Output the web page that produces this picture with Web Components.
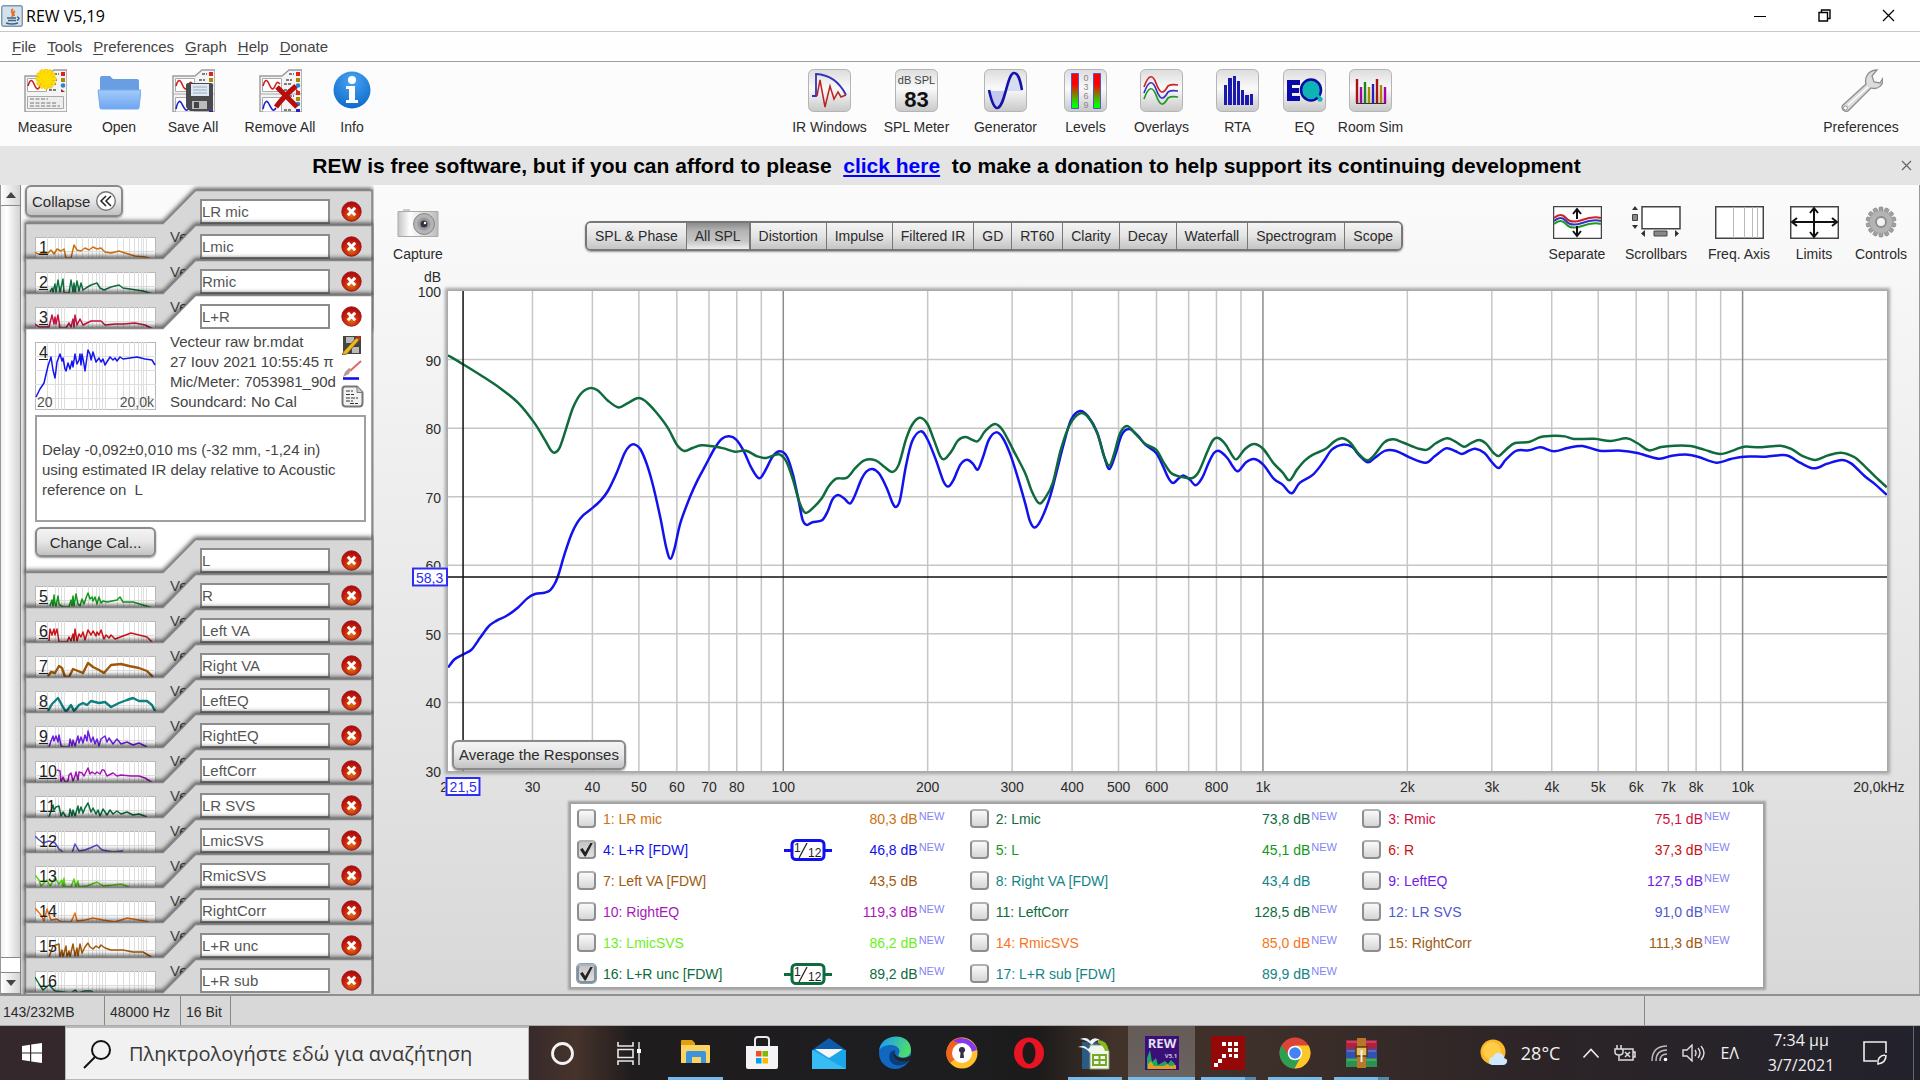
<!DOCTYPE html>
<html lang="el">
<head>
<meta charset="utf-8">
<title>REW V5,19</title>
<style>
  html, body { margin: 0; height: 100%; }
  body {
    display: flex; flex-direction: column; height: 100vh; overflow: hidden;
    font-family: "Liberation Sans", Arial, sans-serif; font-size: 15px; color: #2b2b2b; background: #fcfcfc;
  }
  main { flex: 1; min-height: 0; display: flex; background: linear-gradient(#fbfbfb, #d8d8d8); }
  rew-graph { flex: 1; min-width: 0; }
</style>
</head>
<body>
<win-titlebar>REW V5,19</win-titlebar>
<rew-menubar></rew-menubar>
<rew-toolbar>
  <tool-button slot="start" icon="measure" style="--w:74px">Measure</tool-button>
  <tool-button slot="start" icon="open" style="--w:74px">Open</tool-button>
  <tool-button slot="start" icon="save" style="--w:74px">Save All</tool-button>
  <tool-button slot="start" icon="remove" style="--w:100px">Remove All</tool-button>
  <tool-button slot="start" icon="info" style="--w:44px">Info</tool-button>
  <tool-button icon="ir" style="--w:86px">IR Windows</tool-button>
  <tool-button icon="meter" style="--w:88px">SPL Meter</tool-button>
  <tool-button icon="generator" style="--w:90px">Generator</tool-button>
  <tool-button icon="levels" style="--w:70px">Levels</tool-button>
  <tool-button icon="overlays" style="--w:82px">Overlays</tool-button>
  <tool-button icon="rta" style="--w:70px">RTA</tool-button>
  <tool-button icon="eq" style="--w:64px">EQ</tool-button>
  <tool-button icon="room" style="--w:68px">Room Sim</tool-button>
  <tool-button slot="end" icon="wrench" style="--w:88px">Preferences</tool-button>
</rew-toolbar>
<rew-banner>REW is free software, but if you can afford to please&nbsp; <a href="#donate">click here</a>&nbsp; to make a donation to help support its continuing development</rew-banner>
<main>
  <measurement-panel></measurement-panel>
  <rew-graph></rew-graph>
</main>
<rew-statusbar></rew-statusbar>
<win-taskbar></win-taskbar>

<script>
const plate = (id) => `<defs><linearGradient id="${id}" x1="0" y1="0" x2="0" y2="1"><stop offset="0" stop-color="#dcdcdc"/><stop offset=".45" stop-color="#fafafa"/><stop offset="1" stop-color="#c8c8c8"/></linearGradient></defs><rect x=".5" y=".5" width="42" height="42" rx="5" fill="url(#${id})" stroke="#b4b4b4"/>`;
const sheet = `<path d="M1 43V7h22l7-6h13v42z" fill="#f4f4f4" stroke="#9a9a9a" stroke-width="1.4"/><path d="M3.5 9.500h19v13h-19z" fill="#fff" stroke="#aaa"/><path d="M4 17C6 10 8 10 10 15s4 7 6 2 3-4 5-2" fill="none" stroke="#c22" stroke-width="1.600"/><path d="M30 5h5M27 11h6M25 15h7M25 21h7" stroke="#555" stroke-width="1.300" stroke-dasharray="3 1"/><path d="M37 3h4v4h-4z" fill="#d22"/><path d="M37 9h4v4h-4z" fill="#a80"/><circle cx="39" cy="16.500" r="2.300" fill="#28c"/><path d="M37 20l4 3h-4z" fill="#a22"/>`;
const lower = `<path d="M1 25h42" stroke="#aaa"/><path d="M3.500 28.500h19V43h-19z" fill="#fff" stroke="#aaa"/><path d="M4 40c2-9 4-9 6-5s4 9 7 4" fill="none" stroke="#22c" stroke-width="1.600"/><path d="M30 27h5M25 41h8" stroke="#555" stroke-width="1.300" stroke-dasharray="3 1"/><path d="M37 22h4v4h-4z" fill="#d22"/><path d="M37 28h4v4h-4z" fill="#a80"/><circle cx="39" cy="35" r="2.300" fill="#28c"/><path d="M37 40h4v3h-4z" fill="#22c"/>`;
const burst = Array.from({length: 12}, (_, i) => `<path d="M22 10L20 1.500a2 2 0 0 1 4 0z" transform="rotate(${i * 30} 22 10)"/>`).join('');
const teeth = Array.from({length: 14}, (_, i) => `<rect x="14" y="1" width="4" height="8" rx="1" transform="rotate(${i * 360 / 14} 16 16)"/>`).join('');

const ICONS = {
  measure: [43, 43, `${sheet}<path d="M3.500 27.500h36v12h-36z" fill="#eee" stroke="#aaa"/><path d="M6 30h18M6 34h26M6 37h30" stroke="#777" stroke-width="1.200" stroke-dasharray="4 1.500"/><g fill="#fd0" stroke="#eb0" stroke-width=".6">${burst}<circle cx="22" cy="10" r="6.500" stroke="none"/></g>`],
  open: [44, 44, `<defs><linearGradient id="of" x1="0" y1="0" x2="0" y2="1"><stop offset="0" stop-color="#a4cafa"/><stop offset="1" stop-color="#6ca6f0"/></linearGradient></defs><path d="M3 36V9q0-2 2-2h8l3 3h24q2 0 2 2v24z" fill="#6a9ee2"/><path d="M1 21h43l-2 18q0 1-2 1H5q-2 0-2-1z" fill="url(#of)" stroke="#78aaf0"/>`],
  save: [43, 43, `${sheet}${lower}<g transform="translate(14 14)"><path d="M0 2q0-2 2-2h22q3 0 3 2v26H4l-4-4z" fill="#4a4a4e"/><path d="M5 1h18v12H5z" fill="#dfe9f4"/><path d="M7 4h14M7 7h14M7 10h14" stroke="#9ab"/><path d="M6 18h15v8H6z" fill="#bbb"/><path d="M8 19h5v6H8z" fill="#444"/></g>`],
  remove: [43, 43, `${sheet}${lower}<path d="M18 18l20 20M37 17C30 23 22 31 17 38" stroke="#b80d0d" stroke-width="5" fill="none"/>`],
  info: [38, 43, `<defs><radialGradient id="inf" cx=".5" cy=".25" r=".8"><stop offset="0" stop-color="#4aa4f4"/><stop offset="1" stop-color="#0a68c8"/></radialGradient></defs><circle cx="19" cy="21" r="18.500" fill="url(#inf)"/><circle cx="19" cy="11" r="4" fill="#fff"/><path d="M13 17h9v14h3v3H13v-3h3V20h-3z" fill="#fff"/>`],
  ir: [43, 43, `${plate('p')}<path d="M4 27h4V5Q28 6 38 26" fill="none" stroke="#33b" stroke-width="1.800"/><path d="M9 27l3-16 5 27 5-21 4 13 4-7 3 5 5-2" fill="none" stroke="#b22" stroke-width="1.500"/>`],
  meter: [43, 43, `${plate('p')}<text x="21.500" y="15" font-size="11" text-anchor="middle" fill="#444">dB SPL</text><text x="21.500" y="38" font-size="22" font-weight="700" text-anchor="middle" fill="#111">83</text>`],
  generator: [43, 43, `${plate('p')}<path d="M5 22h17C17 36 15 39 13 39S8 34 5 22z" fill="#c4c8ec"/><path d="M22 22h16C35 8 33 4 30 4s-5 8-8 18z" fill="#d8dcf0"/><path d="M5 21c3 14 6 18 8 18 8 0 10-35 17-35 4 0 6 6 8 17" fill="none" stroke="#1414aa" stroke-width="2.600"/>`],
  levels: [43, 43, `${plate('p')}<defs><linearGradient id="lv" x1="0" y1="0" x2="0" y2="1"><stop offset=".3" stop-color="#f00"/><stop offset=".9" stop-color="#0f0"/></linearGradient></defs><path d="M7.500 4.500h7v35h-7zM29.500 4.500h7v35h-7z" fill="url(#lv)" stroke="#55c"/><g font-size="9" fill="#888" text-anchor="middle"><text x="22" y="12">0</text><text x="22" y="21">3</text><text x="22" y="30">6</text><text x="22" y="39">9</text></g>`],
  overlays: [43, 43, `${plate('p')}<g fill="none" stroke-width="1.700"><path d="M4 18C9 4 13 6 16 14s6 14 12 3q3-2 10-1" stroke="#c22"/><path d="M4 24C9 10 13 12 16 20s6 14 12 3q3-2 10-1" stroke="#33c"/><path d="M4 30C9 16 13 18 16 26s6 14 12 3q3-2 10-1" stroke="#292"/></g>`],
  rta: [43, 43, `${plate('p')}<path d="M8 36V16h3V36zM12 36V9h4V36zM17 36V7h3V36zM21 36V12h3V36zM25 36V21h3V36zM29 36V26h4V36zM34 36V25h3V36z" fill="#1a1ab0"/>`],
  eq: [43, 43, `${plate('p')}<path d="M4 11h13v5H9v3h7v5H9v3h8v5H4z" fill="#0a0aa8"/><ellipse cx="28" cy="21" rx="10" ry="10.500" fill="#0cb4b4" stroke="#0a0aa8" stroke-width="2.500"/><path d="M34 26l5 5M35 31h4" stroke="#0cb4b4" stroke-width="3"/>`],
  room: [43, 43, `${plate('p')}<g stroke-width="2.400"><path d="M8 34V10M28 34V10" stroke="#a11"/><path d="M12 34V18M36 34V18" stroke="#a0a"/><path d="M16 34V13" stroke="#182"/><path d="M20 34V18M32 34V16" stroke="#a80"/><path d="M24 34V15" stroke="#22b"/></g><path d="M7 34.500h30" stroke="#333"/>`],
  wrench: [44, 44, `<path d="M4 36L27 15C25 8 30 1 38 1l-5 6 2 6 6 1 3-5c1 7-5 12-12 10L10 41c-3 4-9-1-6-5z" fill="#dcdcdc" stroke="#8e8e8e" stroke-width="1.300"/><path d="M9 36l20-18" stroke="#fff" stroke-width="1.500"/><circle cx="6.500" cy="39" r="2" fill="#fff" stroke="#999"/>`],
  capture: [42, 30, `<defs><linearGradient id="cm"><stop offset="0" stop-color="#c4c4c4"/><stop offset=".3" stop-color="#fff"/><stop offset="1" stop-color="#bbb"/></linearGradient></defs><path d="M6 1h7v3H6z" fill="#ccc"/><path d="M1 3.500h40v25H1z" fill="url(#cm)" stroke="#aaa"/><circle cx="27" cy="16" r="10.500" fill="#b4b4b4" stroke="#888"/><circle cx="27" cy="16" r="6.500" fill="#999"/><circle cx="27" cy="16" r="3.500" fill="#334"/><circle cx="28" cy="15" r="1.200" fill="#fff"/>`],
  separate: [49, 33, `<path d="M.5.5h48v32H.5z" fill="#fff" stroke="#444" stroke-width="1.500"/><g fill="none" stroke-width="2"><path d="M1 12q7-6 12 0t16 2 19-2" stroke="#c22"/><path d="M1 15q7-6 12 0t16 2 19-2" stroke="#33c"/><path d="M1 18q7-6 12 0t16 2 19-2" stroke="#292"/></g><path d="M24 4v9M24 20v9M20 8l4-5 4 5M20 25l4 5 4-5" stroke="#111" stroke-width="2" fill="none"/>`],
  scrollbars: [50, 33, `<path d="M11 .7h38v22H11z" fill="#fff" stroke="#444" stroke-width="1.500"/><path d="M1.500 8.500h5v6h-5zM23 25h13v5H23z" fill="#888" stroke="#444"/><path d="M1 4l3-4 3 4zM1 19h6l-3 4zM14 24v7l-4-3.500zM44 24v7l4-3.500z" fill="#333"/>`],
  freqaxis: [49, 33, `<path d="M.7.7h47.600v31.600H.7z" fill="#fff" stroke="#444" stroke-width="1.500"/><path d="M18.500 1v31M29.500 1v31M37.500 1v31M42.500 1v31" stroke="#bbb"/>`],
  limits: [49, 33, `<path d="M.7.7h47.600v31.600H.7z" fill="#fff" stroke="#444" stroke-width="1.500"/><path d="M3 16h43M24 3v27M7 12l-5 4 5 4M42 12l5 4-5 4M20 7l4-5 4 5M20 26l4 5 4-5" stroke="#111" stroke-width="2" fill="none"/>`],
  controls: [32, 33, `<g fill="#a0a0a0" stroke="#808080" stroke-width=".6">${teeth}</g><circle cx="16" cy="16" r="11" fill="#b4b4b4"/><circle cx="16" cy="16" r="6" fill="#8e8e8e"/><circle cx="16" cy="16" r="4" fill="#f4f4f4"/>`],
  del: [21, 21, `<defs><radialGradient id="dl" cx=".5" cy=".7" r=".6"><stop offset="0" stop-color="#e07010"/><stop offset=".55" stop-color="#cc2a0a"/><stop offset="1" stop-color="#b00c10"/></radialGradient></defs><circle cx="10.500" cy="10.500" r="9.700" fill="url(#dl)" stroke="#a01818"/><path d="M6.800 6.800l7.400 7.400M14.200 6.800l-7.400 7.400" stroke="#fff" stroke-width="3"/>`],
  pencil: [20, 20, `<path d="M1 1h18v18H4l-3-3z" fill="#444"/><path d="M4 2h8v6H4zM10 12h7v6h-7z" fill="#bbb"/><path d="M16 1l3 2L5 19l-5 1 2-4z" fill="#eab820" stroke="#5a4408" stroke-width=".7"/><path d="M16 1l3 2-2 2-3-2z" fill="#d22"/>`],
  brush: [20, 20, `<path d="M19 1L8 11" stroke="#e06868" stroke-width="2"/><path d="M9 9l-2 5-6 3 2-5 4-4z" fill="#b89a90"/><path d="M1 18.500h16" stroke="#11e" stroke-width="2.600"/>`],
  page: [23, 23, `<path d="M4 1.500h12l5.500 6V18q0 3.500-3.500 3.500H5q-3.500 0-3.500-3.500V4Q1.500 1.500 4 1.500z" fill="#f2f2f2" stroke="#777" stroke-width="2"/><path d="M16 1.500v6h5.500" fill="#ccc" stroke="#777"/><path d="M5 6h7M5 9.500h8M5 13h12M5 16h7M9 18.500h8" stroke="#333" stroke-width="1.200" stroke-dasharray="4 1"/>`],
  java: [22, 22, `<rect x=".7" y=".7" width="20.600" height="20.600" rx="2" fill="#d4e0ea" stroke="#7c98b0" stroke-width="1.400"/><path d="M12 4c-4 3 2 4-1 8M14 6c-3 2-1 3-1 5" stroke="#e07028" stroke-width="1.800" fill="none"/><path d="M6 13h9M7 15.500h8M5 18q6 2 12 0M16 12q4 1 0 3.500" stroke="#3c6488" stroke-width="1.500" fill="none"/>`],
  start: [22, 22, `<path d="M1 4l8-1.200V10.500H1zM10.200 2.600L21 1v9.500H10.200zM1 11.600h8v7.700L1 18zM10.200 11.600H21V21l-10.800-1.600z" fill="#fff"/>`],
  search: [30, 30, `<circle cx="18" cy="11" r="9" fill="none" stroke="#111" stroke-width="2"/><path d="M12 18L1 29" stroke="#111" stroke-width="2"/>`],
  cortana: [25, 25, `<circle cx="12.500" cy="12.500" r="10" fill="none" stroke="#f4f4f4" stroke-width="2.800"/>`],
  taskview: [26, 25, `<path d="M2 1v4h15V1M2 24v-4h15v4M2 8.500h15v8H2z" fill="none" stroke="#e8e8e8" stroke-width="1.600"/><path d="M23 1v23" stroke="#e8e8e8" stroke-width="1.400"/><path d="M21 8h4v4h-4z" fill="#fff"/>`],
  explorer: [30, 30, `<path d="M0 6V3q0-1 1-1h10l3 3v6H0z" fill="#e0a010"/><path d="M0 7h28q1 0 1 1v16q0 1-1 1H0z" fill="#fcd462"/><path d="M5 25V15q0-2 2-2h16q2 0 2 2v10h-5v-6h-9v6z" fill="#3c94dc"/>`],
  store: [34, 34, `<path d="M10 11V4q0-3 3-3h8q3 0 3 3v7" fill="none" stroke="#e8e8e8" stroke-width="2"/><path d="M1 10h32v21q0 2-2 2H3q-2 0-2-2z" fill="#f4f4f4"/><path d="M11 15h5.500v5.500H11z" fill="#f05022"/><path d="M17.500 15H23v5.500h-5.500z" fill="#7eb900"/><path d="M11 22h5.500v5.500H11z" fill="#00a3ee"/><path d="M17.500 22H23v5.500h-5.500z" fill="#fdb800"/>`],
  mail: [34, 31, `<path d="M0 12L17 0l17 12z" fill="#0c5aa8"/><path d="M0 12h34v19H0z" fill="#1ca4e8"/><path d="M0 12l34 19H0z" fill="#38bcf4"/><path d="M3 11h28L17 20z" fill="#f4f6f8"/>`],
  edge: [34, 34, `<defs><linearGradient id="eg" x1="0" y1="0" x2="1" y2=".4"><stop offset=".2" stop-color="#22a4e4"/><stop offset="1" stop-color="#4cdc70"/></linearGradient></defs><circle cx="17" cy="17" r="16" fill="#1068c0"/><path d="M1 15C3-4 33-4 33 14c0 6-6 9-11 7-4-2 1-3-1-8C18 7 4 8 1 15z" fill="url(#eg)"/><path d="M12 17c-3 8 3 14 12 12 4-1 6-3 7-5-6 3-15 1-15-5 0-2 1-4 2-4-3-1-5 0-6 2z" fill="#0a3c80"/><path d="M17 14c-2 6 5 10 13 7q3-2 3 0-1 3-3 4c-7 2-15-1-14-7z" fill="#222226"/>`],
  brave: [32, 32, `<circle cx="16" cy="16" r="15.500" fill="#ffc02c"/><path d="M16 .5A15.500 15.500 0 0 0 4 26l8-6 1-13z" fill="#f0641e"/><path d="M7 4a15.500 15.500 0 0 1 24 9l-10 3-8-10z" fill="#8438f0"/><circle cx="16" cy="16" r="10" fill="#fff"/><path d="M16 10a3 3 0 0 0-1.500 5.700L14 21h4l-.5-5.300A3 3 0 0 0 16 10z" fill="#334"/>`],
  opera: [32, 32, `<ellipse cx="16" cy="16" rx="15" ry="15.500" fill="#e81424"/><ellipse cx="16" cy="16" rx="6.500" ry="11" fill="#1e1a1a"/>`],
  calc: [34, 34, `<path d="M4 6h16v27H4z" fill="#2c5a80"/><path d="M12 9h13l6 6v18H12z" fill="#f2f6ea" stroke="#8a9a70"/><path d="M20 4q9 0 11 11h-4q-2-6-7-8z" fill="#88b820"/><path d="M15 19h13v10H15zM15 24h13M21.500 19v10" fill="none" stroke="#74a828" stroke-width="2"/><path d="M2 3q7-3 10 2 4-5 10-1-5 0-8 5Q9 4 2 3zM0 11q7-3 10 2 4-5 10-1-5 0-8 5-4-6-12-6z" fill="#eef4f8"/>`],
  rew: [34, 34, `<path d="M0 0h34v34H0z" fill="#3a1078"/><text x="17" y="12" font-size="13" font-weight="700" text-anchor="middle" fill="#e4e0f0">REW</text><text x="26" y="22" font-size="6" font-weight="700" text-anchor="middle" fill="#c8c0e0">V5.1</text><path d="M2 33V22l3-8 2 12 4-4 2 7 7-4 3 3 3-4 4 4v5z" fill="#1aa860"/><path d="M3 33v-5l3-3 3 5 10 0 3-2 3 2 6-1v4z" fill="#e0a020"/>`],
  red: [34, 34, `<path d="M0 0h34v34H0z" fill="#940808"/><path d="M11 6h4v4h-4zM17 6h4v4h-4zM23 6h4v4h-4zM17 12h4v4h-4zM23 12h4v4h-4zM11 18h4v4h-4zM23 18h4v4h-4zM7 23h4v4H7zM3 27h4v4H3zM18 18h3v3h-3z" fill="#fff"/>`],
  chrome: [32, 32, `<circle cx="16" cy="16" r="15.500" fill="#dc4438"/><path d="M2.600 8.200A15.500 15.500 0 0 0 15.500 31.500L22 19.500 10 19z" fill="#2aa050"/><path d="M15.500 31.500A15.500 15.500 0 0 0 29.500 8.500H16l6 11z" fill="#fcc828"/><circle cx="16" cy="16" r="7.300" fill="#fff"/><circle cx="16" cy="16" r="5.800" fill="#4484f0"/>`],
  winrar: [34, 30, `<path d="M1 2h31v9H1z" fill="#b02040"/><path d="M1 11h31v9H1z" fill="#3450b0"/><path d="M1 20h31v9H1z" fill="#2c9050"/><path d="M2 4h29M2 13h29M2 22h29" stroke="#fff" stroke-opacity=".35"/><path d="M12 0h9v30h-9z" fill="#b87828"/><path d="M11 9h11v9H11z" fill="#e8c060" stroke="#5a3a10" stroke-width="1.500"/><path d="M16.500 12v12" stroke="#eee" stroke-width="2"/>`],
  weather: [28, 28, `<circle cx="13" cy="13" r="12.500" fill="#fcb828"/><circle cx="12" cy="12" r="9" fill="#ffcc48"/><path d="M12 26q-4-1-3-5 1-3 4-3 2-5 7-4 4 1 4 5 4 1 3 4-1 3-4 3z" fill="#cfe8fc"/>`],
  chevron: [18, 12, `<path d="M1.500 10.500L9 2.500l7.500 8" fill="none" stroke="#eee" stroke-width="1.600"/>`],
  battery: [22, 18, `<path d="M6 5h13v11H6M19 8h2v5h-2M3 1v4M7 1v4M1 5h8v3q0 3-4 3t-4-3zM5 11v6M11 8l5 5M16 8l-5 5" fill="none" stroke="#ddd" stroke-width="1.500"/>`],
  wifi: [18, 18, `<path d="M2 17Q2 2 17 2M6 17Q6 6 17 6M10 17q0-7 7-7" fill="none" stroke="#bbb" stroke-width="1.500"/><circle cx="15.500" cy="15.500" r="1.800" fill="#fff"/>`],
  sound: [24, 18, `<path d="M1 6h4l5-5v16l-5-5H1zM13 6q2 3 0 6M16 4q4 5 0 10M19 2q6 7 0 14" fill="none" stroke="#ddd" stroke-width="1.400"/>`],
  notice: [24, 24, `<path d="M14 20H1V1h22v11M22 14q-8 1-7 9 8-1 8-9" fill="none" stroke="#eee" stroke-width="1.600"/>`],
};
const icon = (name) => {
  const [w, h, body] = ICONS[name];
  return `<svg class="icon" width="${w}" height="${h}" viewBox="0 0 ${w} ${h}" aria-hidden="true">${body}</svg>`;
};

const RESET = `
  :host, *, *::before, *::after { box-sizing: border-box; }
  button, input, textarea { font: inherit; color: inherit; margin: 0; }
  button { padding: 0; border: 0; background: none; }
  svg { display: block; flex: none; }
  .soft { border: 2px solid #8a8a8a; border-radius: 6px; background: linear-gradient(#f4f4f4, #e6e6e6 50%, #c2c2c2); box-shadow: 0 1px 2px #999; }
`;
class Base extends HTMLElement {
  connectedCallback() {
    if (this.shadowRoot) return;
    this.attachShadow({ mode: 'open' }).innerHTML = `<style>${RESET}${this.styles()}</style>${this.markup()}`;
  }
}

customElements.define('win-titlebar', class extends Base {
  styles() { return `
    :host { display: flex; align-items: center; height: 31px; padding: 0 0 0 1px; gap: 3px; background: #fff; color: #000; font: 16px "Open Sans", "Noto Sans", sans-serif; }
    .name { flex: 1; }
    .controls { display: flex; }
    button { width: 64px; height: 31px; display: grid; place-items: center; }`; }
  markup() { return `${icon('java')}<span class="name"><slot></slot></span>
    <div class="controls">
    <button aria-label="Minimize"><svg width="12" height="12"><path d="M0 6.500h12" stroke="#000"/></svg></button>
    <button aria-label="Restore"><svg width="13" height="13"><path d="M1 3.500h8.500V12H1zM3.500 3V1H12v8.500H10" fill="none" stroke="#000" stroke-width="1.400"/></svg></button>
    <button aria-label="Close"><svg width="13" height="13"><path d="M1 1l11 11M12 1L1 12" stroke="#000" stroke-width="1.200"/></svg></button></div>`; }
});

customElements.define('rew-menubar', class extends Base {
  styles() { return `
    :host { display: flex; align-items: center; gap: 11px; height: 31px; padding-left: 12px; border-top: 1px solid #c8c8c8; border-bottom: 1px solid #9a9ea6; background: #fefefe; color: #444; }
    button { line-height: 20px; }
    u { text-underline-offset: 2px; }`; }
  markup() { return ['File', 'Tools', 'Preferences', 'Graph', 'Help', 'Donate'].map(t => `<button><u>${t[0]}</u>${t.slice(1)}</button>`).join(''); }
});

customElements.define('tool-button', class extends Base {
  styles() { return `
    :host { display: block; width: var(--w, auto); }
    button { display: flex; flex-direction: column; align-items: center; width: 100%; gap: 5px; line-height: 20px; white-space: nowrap; }
    .box { display: grid; place-items: center; height: var(--icon-h, 43px); }`; }
  markup() { return `<button><span class="box">${icon(this.getAttribute('icon'))}</span><span><slot></slot></span></button>`; }
});

customElements.define('rew-toolbar', class extends Base {
  styles() { return `
    :host { display: flex; justify-content: space-between; height: 84px; padding: 7px 15px 0 8px; background: #fcfcfc; font-size: 14px; }
    div { display: flex; }`; }
  markup() { return `<div><slot name="start"></slot></div><div><slot></slot></div><div><slot name="end"></slot></div>`; }
});

customElements.define('rew-banner', class extends Base {
  styles() { return `
    :host { display: flex; align-items: center; height: 39px; padding-right: 8px; background: #e4e4e4; color: #000; font-size: 21px; font-weight: 700; }
    p { flex: 1; margin: 0; padding-right: 8px; text-align: center; }
    ::slotted(a) { color: #00f; }`; }
  markup() { return `<p><slot></slot></p><button aria-label="Close"><svg width="11" height="11"><path d="M1 1l9 9M10 1l-9 9" stroke="#666" stroke-width="1.200"/></svg></button>`; }
});

const MEASUREMENTS = [
  ['LR mic', '#cc7010', '0,15 3,17 13,16 16,13 19,17 22,12 26,14 29,12 31,21 36,21 39,8 42,13 46,14 50,11 54,13 58,10 62,12 66,11 70,15 76,16 84,14 90,16 100,19 110,20 117,22'],
  ['Lmic', '#0f7040', '15,20 17,16 18,20 20,12 21,20 23,8 25,20 28,7 29,21 34,21 36,8 38,20 39,11 40,20 42,9 44,19 46,11 48,18 51,16 56,13 62,11 65,16 69,18 76,15 84,13 88,16 95,17 108,19 118,22'],
  ['Rmic', '#c81440', '0,17 4,20 14,20 17,8 19,17 20,10 21,17 23,8 25,21 31,21 34,16 36,20 38,12 39,20 40,8 42,18 45,12 48,18 56,14 66,14 70,18 80,17 88,17 100,16 110,18 118,22'],
  ['L+R', '#1414f0', '1,55 5,47 9,41 13,24 16,15 18,28 20,36 22,20 25,12 27,19 28,16 30,27 31,29 33,21 35,27 37,19 38,25 40,12 42,22 44,18 45,12 46,23 47,12 49,22 50,29 53,8 55,12 56,18 58,10 61,20 64,16 66,20 68,17 70,23 75,15 78,18 80,16 82,19 85,15 88,17 95,16 102,15 110,17 117,18 120,23'],
  ['L', '#12991a', '15,20 17,14 18,20 19,9 20,18 21,20 23,10 24,18 26,20 29,21 34,21 36,14 37,20 38,10 39,20 41,8 43,18 45,20 47,13 49,18 51,12 53,7 55,13 57,11 58,15 60,11 62,18 64,11 66,17 68,15 72,16 77,15 82,14 85,11 88,16 98,16 108,19 118,22'],
  ['R', '#cc1418', '14,20 15,8 17,14 19,8 20,14 22,8 24,21 32,21 34,16 36,20 38,13 39,20 40,8 42,20 44,13 46,16 48,11 50,19 53,9 56,14 58,10 61,15 62,11 64,14 66,9 69,18 71,14 74,17 76,14 80,18 88,15 96,12 104,14 112,16 118,22'],
  ['Left VA', '#a05808', '13,20 16,16 20,17 24,10 27,12 30,21 34,21 38,13 43,15 48,17 53,7 58,11 64,14 69,17 76,9 86,8 94,10 104,12 112,15 118,21'],
  ['Right VA', '#0e8080', '13,20 17,13 23,7 28,16 31,21 36,14 39,20 44,14 48,12 52,14 56,10 64,12 70,11 76,16 84,12 92,9 98,7 104,10 112,10 117,14 120,20'],
  ['LeftEQ', '#6a1ee0', '14,21 16,15 18,10 19,15 21,10 23,16 24,9 26,20 29,21 34,21 35,13 37,20 38,14 40,20 43,10 44,17 46,11 48,17 50,9 52,15 53,5 56,16 58,11 60,18 62,13 64,20 66,13 70,10 72,16 74,12 78,18 82,13 86,18 92,16 98,19 104,17 112,21'],
  ['RightEQ', '#a414b8', '22,9 25,10 26,21 28,16 30,21 33,20 34,14 36,12 38,20 40,15 41,11 43,19 44,11 47,12 49,15 51,11 53,7 55,13 57,11 60,13 62,11 65,13 67,9 69,9 72,15 78,12 82,15 86,14 96,15 104,15 110,17 118,22'],
  ['LeftCorr', '#0c6c3c', '14,21 18,9 19,14 21,11 24,10 26,20 28,16 31,21 34,21 35,13 37,20 38,14 40,20 43,10 44,17 46,11 48,17 50,12 53,7 56,16 58,12 61,18 63,14 65,20 68,13 72,19 75,14 78,18 82,15 86,18 92,16 98,19 104,18 112,21'],
  ['LR SVS', '#5050c8', '0,5 3,8 8,12 14,10 20,12 24,18 29,22 37,22 40,13 44,20 50,19 55,17 62,14 67,19 78,21 88,20'],
  ['LmicSVS', '#58d810', '0,9 4,14 6,20 12,14 15,20 20,12 24,18 27,14 28,21 29,12 30,21 36,21 39,13 41,21 43,15 44,21 52,20 62,16 68,20 78,19 86,18 94,21'],
  ['RmicSVS', '#f07010', '0,7 6,14 9,20 12,8 16,19 22,18 26,21 36,21 40,12 42,20 50,19 58,17 68,19 80,21 92,17 104,19 114,21'],
  ['RightCorr', '#a05808', '14,21 18,10 24,8 25,21 27,14 28,21 31,10 32,21 34,15 35,21 38,8 40,20 42,12 43,20 45,8 47,17 50,11 53,7 55,11 58,13 61,10 64,12 66,9 70,12 76,14 88,14 98,16 108,16 118,22'],
  ['L+R unc', '#0c6c3c', '0,6 4,13 8,19 14,14 20,20 36,22 40,19 43,22 50,20 56,20 62,24'],
  ['L+R sub', '#0e8080', ''],
];

customElements.define('measurement-card', class extends Base {
  styles() {
    const open = this.hasAttribute('open');
    return `
    :host { display: block; position: relative; isolation: isolate; height: ${open ? 244 : 35}px; flex: none; }
    .shape { position: absolute; inset: 0 auto auto 0; z-index: -1; overflow: visible; filter: drop-shadow(0 -2px 2px rgba(0,0,0,.6)); }
    .body { display: flex; flex-direction: column; padding-left: 10px; }
    header { display: flex; gap: 11px; align-items: center; height: 37px; padding: 5px 0 0 165px; }
    header input { width: 130px; height: 25px; padding: 0; border: 2px solid #8c8c8c; border-radius: 0; background: #fff; color: #555; }
    .row { display: flex; height: 83px; }
    .thumb { position: relative; margin-top: 10px; width: 121px; height: 68px; }
    .num { position: absolute; left: 4px; top: 1px; font-size: 16px; line-height: 20px; color: #222; }
    .lo, .hi { position: absolute; bottom: 0; line-height: 16px; font-size: 14px; color: #555; }
    .lo { left: 2px; } .hi { right: 2px; }
    .info { margin-left: 14px; width: 172px; white-space: nowrap; line-height: 20px; color: #444; }
    .tools { display: flex; flex-direction: column; align-items: center; gap: 5px; width: 20px; margin-top: 3px; }
    textarea { width: 331px; height: 107px; padding: 3px 5px; border: 2px solid #a0a0a0; background: #fff; color: #444; line-height: 20px; resize: none; overflow: hidden; display: block; white-space: pre; }
    .cal { width: 121px; height: 30px; margin-top: 5px; }`;
  }
  markup() {
    const n = +this.getAttribute('number');
    const [name, color, pts] = MEASUREMENTS[n - 1];
    const open = this.hasAttribute('open');
    const h = open ? 280 : 72;
    const v = [12, 20, 23, 26, 29, 41, 47, 53, 57, 61, 64, 67, 70, 82, 88, 94, 99, 103, 106, 108, 111];
    const grid = v.map(x => `M${x}.5 0V68`).join('') + 'M0 14.500H121M0 28.500H121M0 42.500H121M0 56.500H121';
    const wide = n === 7 || n === 8 ? 2.4 : 1.5;
    return `
      <svg class="shape" width="347" height="${h}"><path d="M.5 ${h}V33.500H138L170.500 .5H347V${h}" fill="${open ? '#fff' : '#d7d7d7'}" stroke="#858585" stroke-width="1.500"/></svg>
      <div class="body">
        <header><input type="text" aria-label="Measurement ${n} name" value="${name}"><button aria-label="Delete ${name}">${icon('del')}</button></header>
        ${pts ? `<div class="row">
          <div class="thumb">
            <svg width="121" height="68"><rect x=".5" y=".5" width="120" height="67" fill="#fff" stroke="#b8b8b8"/><path d="${grid}" stroke="#dedede"/><polyline points="${pts}" fill="none" stroke="${color}" stroke-width="${wide}" stroke-linejoin="round"/></svg>
            <span class="num">${n <= 10 ? `<u>${n}</u>` : n}</span>
            ${open ? '<span class="lo">20</span><span class="hi">20,0k</span>' : ''}
          </div>
          <div class="info">${open ? 'Vecteur raw br.mdat<br>27 Ιουν 2021 10:55:45 π<br>Mic/Meter: 7053981_90d<br>Soundcard: No Cal' : 'Ve'}</div>
          ${open ? `<div class="tools"><button aria-label="Save">${icon('pencil')}</button><button aria-label="Trace colour">${icon('brush')}</button><button aria-label="Notes">${icon('page')}</button></div>` : ''}
        </div>` : ''}
        ${open ? `<textarea aria-label="Notes">

Delay -0,092±0,010 ms (-32 mm, -1,24 in)
using estimated IR delay relative to Acoustic
reference on  L</textarea><button class="cal soft">Change Cal...</button>` : ''}
      </div>`;
  }
});

customElements.define('measurement-panel', class extends Base {
  styles() { return `
    :host { display: flex; gap: 4px; width: 374px; overflow: hidden; }
    .scroll { display: flex; flex-direction: column; width: 21px; border-left: 1px solid #999; border-right: 1px solid #888; background: #fff; }
    .scroll button { height: 21px; display: grid; place-items: center; background: linear-gradient(90deg, #fff, #d4d4d4); border-bottom: 1px solid #888; }
    .knob { flex: 1; background: linear-gradient(90deg, #f0f0f0, #fff 30%, #d2d2d2); border-bottom: 1px solid #888; }
    .track { height: 15px; border-bottom: 1px solid #888; }
    .col { flex: 1; min-width: 0; display: flex; flex-direction: column; }
    .collapse { display: flex; align-items: center; justify-content: space-between; width: 98px; height: 32px; flex: none; padding: 0 5px; }
    .list { flex: 1; min-height: 0; margin-top: -27px; display: flex; flex-direction: column; }`; }
  markup() { return `
    <div class="scroll">
      <button aria-label="Scroll up"><svg width="10" height="6"><path d="M0 6L5 0l5 6z" fill="#444"/></svg></button>
      <div class="knob"></div><div class="track"></div>
      <button aria-label="Scroll down"><svg width="10" height="6"><path d="M0 0h10L5 6z" fill="#444"/></svg></button>
    </div>
    <div class="col">
      <button class="collapse soft">Collapse<svg width="20" height="20"><circle cx="10" cy="10" r="9.300" fill="#fff" stroke="#777" stroke-width="1.400"/><path d="M10 5l-5 5 5 5M15 5l-5 5 5 5" fill="none" stroke="#222" stroke-width="1.500"/></svg></button>
      <div class="list">${MEASUREMENTS.map((m, i) => `<measurement-card number="${i + 1}" ${i === 3 ? 'open' : ''}></measurement-card>`).join('')}</div>
    </div>`; }
});

/* Each trace is stored in blocks: origin, x divisor, then x,y pairs (y divisor is 3). */
const GREEN = [
  [380, 190, 2.24, '152,496 187,524 230,560 270,596 310,640 345,698 370,752 382,780 391,789 402,775 415,725 432,655 450,612 470,595 488,602 510,632 534,653 555,640 579,625 598,638 620,670 645,715 665,765 682,784 700,775 720,767 745,770 770,776 795,786 820,783 845,800 865,805 893,794 910,815 925,870 940,940 953,970 970,955 990,925 1005,890 1022,867 1045,865 1065,835 1085,812 1110,812 1130,832 1148,847 1162,825 1178,750 1192,705 1209,684 1226,702 1242,755 1255,800 1265,808 1280,785 1295,752 1312,742 1338,755 1355,725 1377,703 1395,722 1420,785 1445,850 1460,905 1476,941 1490,925 1507,880 1525,780 1545,705'],
  [1080, 190, 1.8667, '0,671 15,682 32,730 45,800 55,828 65,785 75,730 88,709 105,735 122,763 142,780 155,815 170,850 190,862 210,865 222,845 238,785 248,752 258,745 272,765 285,800 293,808 308,778 325,763 342,778 362,822 378,848 391,872 405,840 420,812 435,795 458,778 475,755 490,746 505,760 520,792 536,812 550,795 568,758 585,749 605,760 630,776 648,780 665,760 685,746 700,755 717,771 730,760 745,751 758,762 772,790 782,799 795,780 812,760 838,757 860,742 885,738 905,740 922,748 960,747 990,754 1020,746 1040,760 1062,782 1085,772 1110,768 1140,769 1165,780 1195,793 1220,782 1240,771 1270,773 1308,768 1330,780 1350,800 1373,811 1395,798 1420,789 1445,802 1465,830 1485,862 1506,893'],
];
const BLUE = [
  [380, 480, 2.613, '178,565 195,540 220,524 240,510 262,475 285,440 305,424 330,410 360,385 385,357 405,344 430,340 445,332 458,310 468,280 482,225 500,165 515,130 530,108 550,90 575,65 595,35'],
  [380, 190, 2.24, '530,850 548,790 560,768 570,764 583,778 598,825 612,890 628,985'],
  [380, 480, 2.613, '748,205 759,238 770,205 785,130'],
  [380, 190, 2.24, '695,920 712,870 730,825 750,775 766,747 782,740 798,750 815,785 832,835 849,866 862,845 880,800 896,785 912,802 925,855 938,935'],
  [380, 480, 2.613, '1104,120 1115,136 1130,128 1155,122 1170,95 1182,60 1197,46 1213,57 1228,72'],
  [380, 190, 2.24, '1063,920 1078,870 1090,845 1103,838 1118,852 1135,895 1148,940 1156,952 1165,930 1178,830 1192,755 1211,725 1226,748 1245,810 1262,875 1273,891 1285,870 1300,825 1315,810 1328,822 1339,840 1350,805 1364,750 1380,728 1395,745 1412,795 1430,870 1445,940 1456,995 1467,1014 1481,990 1500,925 1515,850 1530,770 1548,690'],
  [1080, 190, 1.8667, '0,664 15,680 32,728 45,800 55,838 66,795 78,735 92,718 108,738 122,765 142,790 155,830 165,865 174,880 185,865 194,858 205,870 216,887 228,865 240,820 250,790 260,784 275,805 285,830 295,845 310,818 325,808 342,825 362,868 378,885 395,911 410,880 435,855 455,815 470,780 490,765 508,772 520,795 537,818 550,805 570,783 590,784 615,803 645,819 662,800 683,776 700,784 713,793 725,784 738,777 755,790 770,820 782,835 795,810 815,783 838,782 860,773 885,785 910,775 938,769 970,783 1010,783 1040,790 1080,807 1105,798 1135,795 1155,802 1188,819 1215,808 1240,801 1280,801 1318,797 1345,820 1370,836 1395,822 1422,811 1440,822 1465,860 1485,885 1506,916'],
];
const trace = (blocks) => {
  const p = blocks.flatMap(([ox, oy, k, s]) => s.split(' ').map(q => { const [x, y] = q.split(','); return [ox + x / k - 448, oy + y / 3 - 291]; }));
  let d = `M${p[0]}`;
  for (let i = 0; i < p.length - 1; i++) {
    const a = p[i - 1] || p[i], b = p[i], c = p[i + 1], e = p[i + 2] || c;
    d += `C${b[0] + (c[0] - a[0]) / 6} ${b[1] + (c[1] - a[1]) / 6} ${c[0] - (e[0] - b[0]) / 6} ${c[1] - (e[1] - b[1]) / 6} ${c[0]} ${c[1]}`;
  }
  return d;
};

const LEGEND = [
  ['1: LR mic', '#cc7010', '80,3', 1], ['2: Lmic', '#0c6c3c', '73,8', 1], ['3: Rmic', '#cc1040', '75,1', 1],
  ['4: L+R [FDW]', '#1010f0', '46,8', 1, 1], ['5: L', '#12991a', '45,1', 1], ['6: R', '#cc1010', '37,3', 1],
  ['7: Left VA [FDW]', '#a05a10', '43,5', 0], ['8: Right VA [FDW]', '#128484', '43,4', 0], ['9: LeftEQ', '#7020e4', '127,5', 1],
  ['10: RightEQ', '#a818b8', '119,3', 1], ['11: LeftCorr', '#0c6c3c', '128,5', 1], ['12: LR SVS', '#5058cc', '91,0', 1],
  ['13: LmicSVS', '#6cf01c', '86,2', 1], ['14: RmicSVS', '#f87420', '85,0', 1], ['15: RightCorr', '#a05a10', '111,3', 1],
  ['16: L+R unc [FDW]', '#0c6c3c', '89,2', 1, 1], ['17: L+R sub [FDW]', '#128484', '89,9', 1],
];

customElements.define('legend-entry', class extends Base {
  styles() { return `
    :host { display: flex; align-items: center; height: 25px; padding-right: 24px; line-height: 20px; font-size: 14px; color: var(--trace); }
    label { display: flex; align-items: center; gap: 7px; flex: 1; }
    input { appearance: none; display: grid; place-items: center; width: 19px; height: 19px; border: 2px solid #8c8e92; border-top-color: #b0b2b6; border-radius: 4px; background: linear-gradient(#fafafa, #d6d6d6); }
    input:checked { background: linear-gradient(#c4c4c4, #e0e0e0); }
    :host([focused]) input { box-shadow: 0 0 0 1px #7da4cc; }
    input:checked::before { content: ""; width: 13px; height: 14px; background: #222; clip-path: polygon(0 50%, 20% 40%, 40% 68%, 82% 0, 100% 0, 45% 100%, 35% 100%); }
    .db { width: 86px; text-align: right; }
    .new { width: 28px; padding: 0 0 6px 1px; font-size: 11px; color: #8484f4; line-height: 16px; }`; }
  markup() {
    const [name, color, db, fresh, on] = LEGEND[this.getAttribute('index')];
    this.style.setProperty('--trace', color);
    return `<label><input type="checkbox" ${on ? 'checked' : ''}>${name}</label>
      ${on ? `<svg width="48" height="22"><path d="M0 11.500h48" stroke="${color}" stroke-width="3"/><rect x="8" y="1.500" width="32" height="19" rx="4" fill="#fff" stroke="${color}" stroke-width="3"/><g fill="#222" font-size="12"><text x="10" y="13">1</text><text x="24" y="18">12</text></g><path d="M23 4l-8 15" stroke="#222" stroke-width="1.300"/></svg>` : ''}
      <span class="db">${db} dB</span><span class="new">${fresh ? 'NEW' : ''}</span>`;
  }
});

customElements.define('rew-tabs', class extends Base {
  styles() { return `
    :host { display: flex; height: 30px; border: 2px solid #777; border-radius: 6px; overflow: hidden; font-size: 14px; box-shadow: 0 1px 2px #999; }
    button { flex: 1 1 auto; border-right: 1px solid #777; background: linear-gradient(#f4f4f4, #e4e4e4 50%, #c4c4c4); white-space: nowrap; }
    button:last-child { border-right: 0; }
    button[aria-pressed=true] { background: linear-gradient(#8c8c8c, #b4b4b4 30%, #c6c6c6 70%, #eee); border-right-width: 2px; }`; }
  markup() { return ['SPL &amp; Phase', 'All SPL', 'Distortion', 'Impulse', 'Filtered IR', 'GD', 'RT60', 'Clarity', 'Decay', 'Waterfall', 'Spectrogram', 'Scope'].map((t, i) => `<button aria-pressed="${i === 1}">${t}</button>`).join(''); }
});

customElements.define('rew-graph', class extends Base {
  styles() { return `
    :host { display: flex; flex-direction: column; border-right: 1px solid #999; }
    .head { display: flex; justify-content: space-between; height: 83px; flex: none; padding: 21px 5px 0 14px; --icon-h: 33px; font-size: 14px; }
    .head > div { display: flex; }
    rew-tabs { width: 818px; margin-top: 15px; }
    .chart { flex: 1; min-height: 0; display: grid; grid-template-columns: 74px 1fr; grid-template-rows: 23px minmax(0, 1fr) 33px; padding-right: 32px; font-size: 14px; line-height: 18px; }
    .unit { padding-right: 7px; text-align: right; }
    .y { grid-row: 2; grid-column: 1; margin: -8px 0 -10px; padding-right: 7px; display: flex; flex-direction: column; justify-content: space-between; text-align: right; }
    .plot { grid-row: 2; grid-column: 2; position: relative; background: #fff; box-shadow: 0 0 3px 3px #a6a6a6; }
    .plot svg { width: 100%; height: 100%; }
    .x { grid-row: 3; grid-column: 2; display: flex; padding-top: 7px; white-space: nowrap; }
    .x div { min-width: 0; }
    .x span { display: inline-block; transform: translateX(-50%); }
    .x div:last-child span { transform: translateX(-66%); }
    .tag { position: absolute; height: 19px; padding: 0 2px; border: 2px solid #2c2cf4; background: #fff; color: #2c2cf4; line-height: 16px; }
    .tagy { right: 100%; top: 59.600%; transform: translateY(-50%); width: 36px; }
    .tagx { left: 1.050%; top: calc(100% + 6px); transform: translateX(-50%); width: 35px; }
    .avg { position: absolute; left: 4px; bottom: 1px; width: 174px; height: 30px; font-size: 15px; }
    .legend { display: grid; flex: none; grid-template-columns: repeat(3, 1fr); gap: 6px 0; margin: 0 156px 7px 197px; padding: 2px 8px 1px 6px; background: #fff; box-shadow: 0 0 2px 3px #a2a2a2; }`; }
  markup() {
    const W = 1439, H = 481, X = f => Math.log10(f / 20) / 3 * W;
    let minor = '', major = '';
    for (const dec of [10, 100, 1000, 10000]) for (let i = 1; i < 10; i++) {
      const f = dec * i;
      if (f <= 20 || f >= 20000) continue;
      if (i === 1) major += `M${X(f)} 0V${H}`; else minor += `M${X(f)} 0V${H}`;
    }
    for (let i = 1; i < 7; i++) minor += `M0 ${i * H / 7}H${W}`;
    const ticks = [[20, '20'], [30, '30'], [40, '40'], [50, '50'], [60, '60'], [70, '70'], [80, '80'], [100, '100'], [200, '200'], [300, '300'], [400, '400'], [500, '500'], [600, '600'], [800, '800'], [1000, '1k'], [2000, '2k'], [3000, '3k'], [4000, '4k'], [5000, '5k'], [6000, '6k'], [7000, '7k'], [8000, '8k'], [10000, '10k'], [20000, '20,0kHz']];
    const xs = ticks.map(([f, t], i) => `<div style="flex:${i < ticks.length - 1 ? Math.log10(ticks[i + 1][0] / f).toFixed(4) + ' 0 0' : '0 0 0'}"><span>${t}</span></div>`).join('');
    return `
      <div class="head">
        <div><tool-button icon="capture" style="--w:60px">Capture</tool-button></div>
        <rew-tabs></rew-tabs>
        <div>
          <tool-button icon="separate" style="--w:74px">Separate</tool-button>
          <tool-button icon="scrollbars" style="--w:84px">Scrollbars</tool-button>
          <tool-button icon="freqaxis" style="--w:82px">Freq. Axis</tool-button>
          <tool-button icon="limits" style="--w:68px">Limits</tool-button>
          <tool-button icon="controls" style="--w:66px">Controls</tool-button>
        </div>
      </div>
      <div class="chart">
        <div class="unit">dB</div>
        <div class="y">${[100, 90, 80, 70, 60, 50, 40, 30].map(v => `<span>${v}</span>`).join('')}</div>
        <div class="x">${xs}</div>
        <div class="plot">
          <svg viewBox="0 0 ${W} ${H}" preserveAspectRatio="none">
            <path d="${minor}" stroke="#c6c6c6" stroke-width="1.500"/><path d="${major}" stroke="#8c8c8c" stroke-width="1.500"/>
            <path d="${trace(BLUE)}" fill="none" stroke="#1212ee" stroke-width="2.500"/>
            <path d="${trace(GREEN)}" fill="none" stroke="#0f6b3c" stroke-width="2.500"/>
            <path d="M${X(21.5)} 0V${H}M-3 286.500H${W}" stroke="#111" stroke-width="1.500"/>
          </svg>
          <button class="avg soft">Average the Responses</button>
          <span class="tag tagy">58,3</span><span class="tag tagx">21,5</span>
        </div>
      </div>
      <div class="legend">${LEGEND.map((l, i) => `<legend-entry index="${i}" ${i === 15 ? 'focused' : ''}></legend-entry>`).join('')}</div>`;
  }
});

customElements.define('rew-statusbar', class extends Base {
  styles() { return `
    :host { display: flex; height: 32px; border-top: 2px solid #909090; border-bottom: 1px solid #aaa; background: #d8d8d8; font-size: 14px; line-height: 32px; }
    span { padding: 0 5px; border-right: 1px solid #888; height: 29px; }
    .mem { width: 105px; padding-left: 3px; } .rate { width: 76px; } .bits { width: 50px; padding-right: 0; } .gap { flex: 1; } .end { width: 275px; border-right: 0; }`; }
  markup() { return `<span class="mem">143/232MB</span><span class="rate">48000 Hz</span><span class="bits">16 Bit</span><span class="gap"></span><span class="end"></span>`; }
});

customElements.define('task-icon', class extends Base {
  styles() { return `
    :host { display: block; flex: 1; height: 54px; }
    :host([state=active]) { background: linear-gradient(#655c58, #6b6360); }
    button { width: 100%; height: 51px; display: grid; place-items: center; padding-top: 3px; }
    i { display: block; height: 3px; margin: 0 6px; background: #76b9ed; }
    i.multi { background: linear-gradient(90deg, #76b9ed 80%, #5587ac 80%); }
    :host([state=active]) i { margin: 0; }`; }
  markup() {
    const s = this.getAttribute('state');
    return `<button aria-label="${this.getAttribute('icon')}">${icon(this.getAttribute('icon'))}</button>${s ? `<i class="${s}"></i>` : ''}`;
  }
});

customElements.define('win-taskbar', class extends Base {
  styles() { return `
    :host { display: flex; height: 54px; flex: none; color: #f0f0f0; font: 16px "Open Sans", "Noto Sans", sans-serif;
      background: linear-gradient(90deg, #35282c 0, #35282c 27%, #46332b 30%, #1f1c1d 33%, #1d1d20 50%, #1c1a1a 54%, #41332a 58%, #3d2f2a 66%, #2c2427 80%, #22222c 100%); }
    .start { width: 65px; display: grid; place-items: center; padding-right: 1px; }
    .search { display: flex; align-items: center; gap: 16px; width: 464px; padding-left: 17px; background: #f1f1f1; border: 1px solid #b8b8b8; border-top-width: 2px; }
    .search input { flex: 1; min-width: 0; border: 0; outline: 0; padding: 0; background: none; font-size: 20px; color: #3a3a3a; }
    .search input::placeholder { color: #3a3a3a; opacity: 1; }
    .apps { display: flex; width: 866px; }
    .tray { margin-left: auto; display: flex; align-items: center; }
    .weather { display: flex; align-items: center; gap: 13px; font-size: 18px; margin-right: 22px; }
    .clock { width: 84px; margin: 0 0 0 20px; text-align: center; line-height: 25px; }
    .sys { display: flex; align-items: center; gap: 14px; }
    .notice { width: 70px; padding-right: 6px; display: grid; place-items: center; }
    .edge { width: 7px; height: 54px; border-left: 1px solid #666; }`; }
  markup() {
    const apps = [['cortana'], ['taskview'], ['explorer', 'on'], ['store'], ['mail'], ['edge'], ['brave'], ['opera'], ['calc', 'on'], ['rew', 'active'], ['red', 'multi'], ['chrome', 'on'], ['winrar', 'multi']];
    return `
      <button class="start" aria-label="Start">${icon('start')}</button>
      <label class="search">${icon('search')}<input type="text" aria-label="Search" placeholder="Πληκτρολογήστε εδώ για αναζήτηση"></label>
      <div class="apps">${apps.map(([n, s]) => `<task-icon icon="${n}" ${s ? `state="${s}"` : ''}></task-icon>`).join('')}</div>
      <div class="tray">
        <div class="weather">${icon('weather')}<span>28°C</span></div>
        <div class="sys">${['chevron', 'battery', 'wifi', 'sound'].map(icon).join('')}<span>ΕΛ</span></div>
        <div class="clock">7:34 μμ<br>3/7/2021</div>
        <button class="notice" aria-label="Notifications">${icon('notice')}</button>
        <div class="edge"></div>
      </div>`;
  }
});
</script>
</body>
</html>
